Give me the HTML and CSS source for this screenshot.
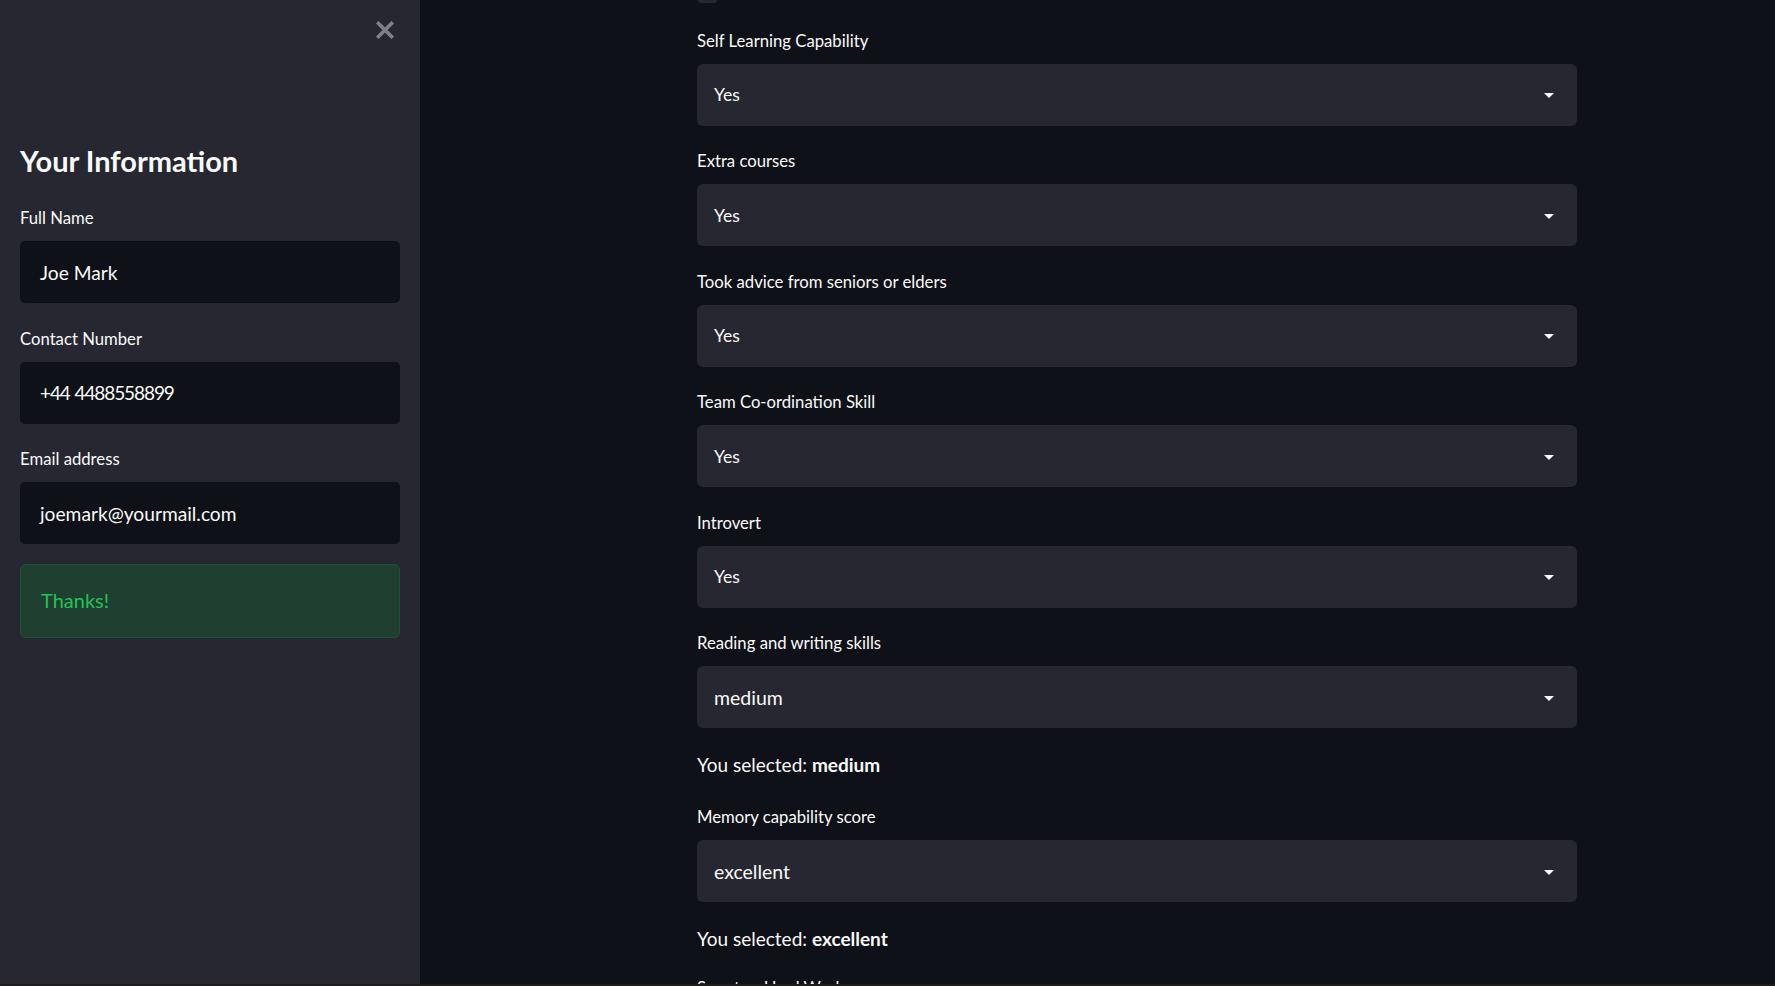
FILE: index.html
```html
<!DOCTYPE html>
<html lang="en">
<head>
<meta charset="utf-8">
<title>Career Form</title>
<link rel="stylesheet" href="styles.css">
</head>
<body>
<div class="app">
  <aside class="sidebar">
    <div class="close-row">
      <svg class="close" viewBox="0 0 18 18" width="18" height="18" aria-label="close">
        <path d="M2.5 2.5 L15.5 15.5 M15.5 2.5 L2.5 15.5" stroke="#7f808a" stroke-width="3.6" stroke-linecap="square" fill="none"/>
      </svg>
    </div>
    <h2 class="side-title">Your Information</h2>
    <div class="side-field">
      <div class="label">Full Name</div>
      <div class="text-input">Joe Mark</div>
    </div>
    <div class="side-field">
      <div class="label">Contact Number</div>
      <div class="text-input digits">+44 4488558899</div>
    </div>
    <div class="side-field">
      <div class="label">Email address</div>
      <div class="text-input">joemark@yourmail.com</div>
    </div>
    <div class="success">Thanks!</div>
  </aside>
  <main class="main">
    <div class="content">
      <div class="stub"></div>
      <div class="field first">
        <div class="label">Self Learning Capability</div>
        <div class="select"><span class="val">Yes</span><svg class="caret" viewBox="0 0 10 5" width="10" height="5"><polygon points="0,0 10,0 5,5" fill="#fafafa"/></svg></div>
      </div>
      <div class="field">
        <div class="label">Extra courses</div>
        <div class="select"><span class="val">Yes</span><svg class="caret" viewBox="0 0 10 5" width="10" height="5"><polygon points="0,0 10,0 5,5" fill="#fafafa"/></svg></div>
      </div>
      <div class="field">
        <div class="label">Took advice from seniors or elders</div>
        <div class="select"><span class="val">Yes</span><svg class="caret" viewBox="0 0 10 5" width="10" height="5"><polygon points="0,0 10,0 5,5" fill="#fafafa"/></svg></div>
      </div>
      <div class="field">
        <div class="label">Team Co-ordination Skill</div>
        <div class="select"><span class="val">Yes</span><svg class="caret" viewBox="0 0 10 5" width="10" height="5"><polygon points="0,0 10,0 5,5" fill="#fafafa"/></svg></div>
      </div>
      <div class="field">
        <div class="label">Introvert</div>
        <div class="select"><span class="val">Yes</span><svg class="caret" viewBox="0 0 10 5" width="10" height="5"><polygon points="0,0 10,0 5,5" fill="#fafafa"/></svg></div>
      </div>
      <div class="field">
        <div class="label">Reading and writing skills</div>
        <div class="select"><span class="val big">medium</span><svg class="caret" viewBox="0 0 10 5" width="10" height="5"><polygon points="0,0 10,0 5,5" fill="#fafafa"/></svg></div>
      </div>
      <p class="selected">You selected: <strong>medium</strong></p>
      <div class="field after">
        <div class="label">Memory capability score</div>
        <div class="select"><span class="val big">excellent</span><svg class="caret" viewBox="0 0 10 5" width="10" height="5"><polygon points="0,0 10,0 5,5" fill="#fafafa"/></svg></div>
      </div>
      <p class="selected">You selected: <strong>excellent</strong></p>
      <div class="field last">
        <div class="label">Smart or Hard Work</div>
      </div>
    </div>
  </main>
</div>
</body>
</html>
```
FILE: styles.css
```css
* { box-sizing: border-box; }
html, body {
  margin: 0;
  padding: 0;
  height: 986px;
  overflow: hidden;
  background: #1c1d1a;
  font-family: "Lato", "Noto Sans", sans-serif;
  color: #fafafa;
}
.app {
  display: flex;
  height: 984px;
  overflow: hidden;
  background: #0e1117;
}
.sidebar {
  width: 420px;
  flex: none;
  background: #262730;
  padding: 0 20px;
  display: flex;
  flex-direction: column;
}
.close-row {
  display: flex;
  justify-content: flex-end;
  padding-top: 21px;
  padding-right: 6px;
  height: 63px;
}
.close { display: block; }
.side-title {
  margin: 80px 0 0 0;
  font-size: 29px;
  line-height: 36px;
  font-weight: 700;
}
.label {
  font-size: 16.7px;
  line-height: 22px;
  margin-bottom: 12px;
}
.side-field { margin-top: 28px; }
.side-field + .side-field { margin-top: 24.5px; }
.text-input {
  height: 62px;
  background: #0e1117;
  border-radius: 5px;
  display: flex;
  align-items: center;
  padding-left: 20px;
  font-size: 19.2px;
}
.text-input.digits { font-size: 19px; letter-spacing: -1.1px; word-spacing: 1px; }
.success {
  margin-top: 20px;
  height: 74px;
  background: #1f3f31;
  border: 1px solid #1d5533;
  border-radius: 6px;
  color: #21c354;
  font-size: 20px;
  display: flex;
  align-items: center;
  padding-left: 20px;
  padding-bottom: 2px;
}
.main {
  flex: 1;
  padding-left: 277px;
}
.content {
  width: 880px;
  display: flex;
  flex-direction: column;
}
.stub {
  width: 19px;
  height: 3px;
  margin-left: 1px;
  background: #262730;
  border-radius: 0 0 4px 4px;
}
.field { margin-top: 24.5px; }
.field.first { margin-top: 26.5px; }
.field.after { margin-top: 28.3px; }
.field.last { margin-top: 25px; }
.select {
  height: 62px;
  background: #262730;
  border-radius: 6px;
  display: flex;
  align-items: center;
  justify-content: space-between;
  padding: 0 23px 0 17px;
}
.val { font-size: 17.6px; }
.val.big { font-size: 19.5px; }
.caret { display: block; margin-top: 2px; }
.selected {
  margin: 24px 0 0 0;
  font-size: 19px;
  line-height: 26px;
}
.selected strong { font-weight: 700; }
```
